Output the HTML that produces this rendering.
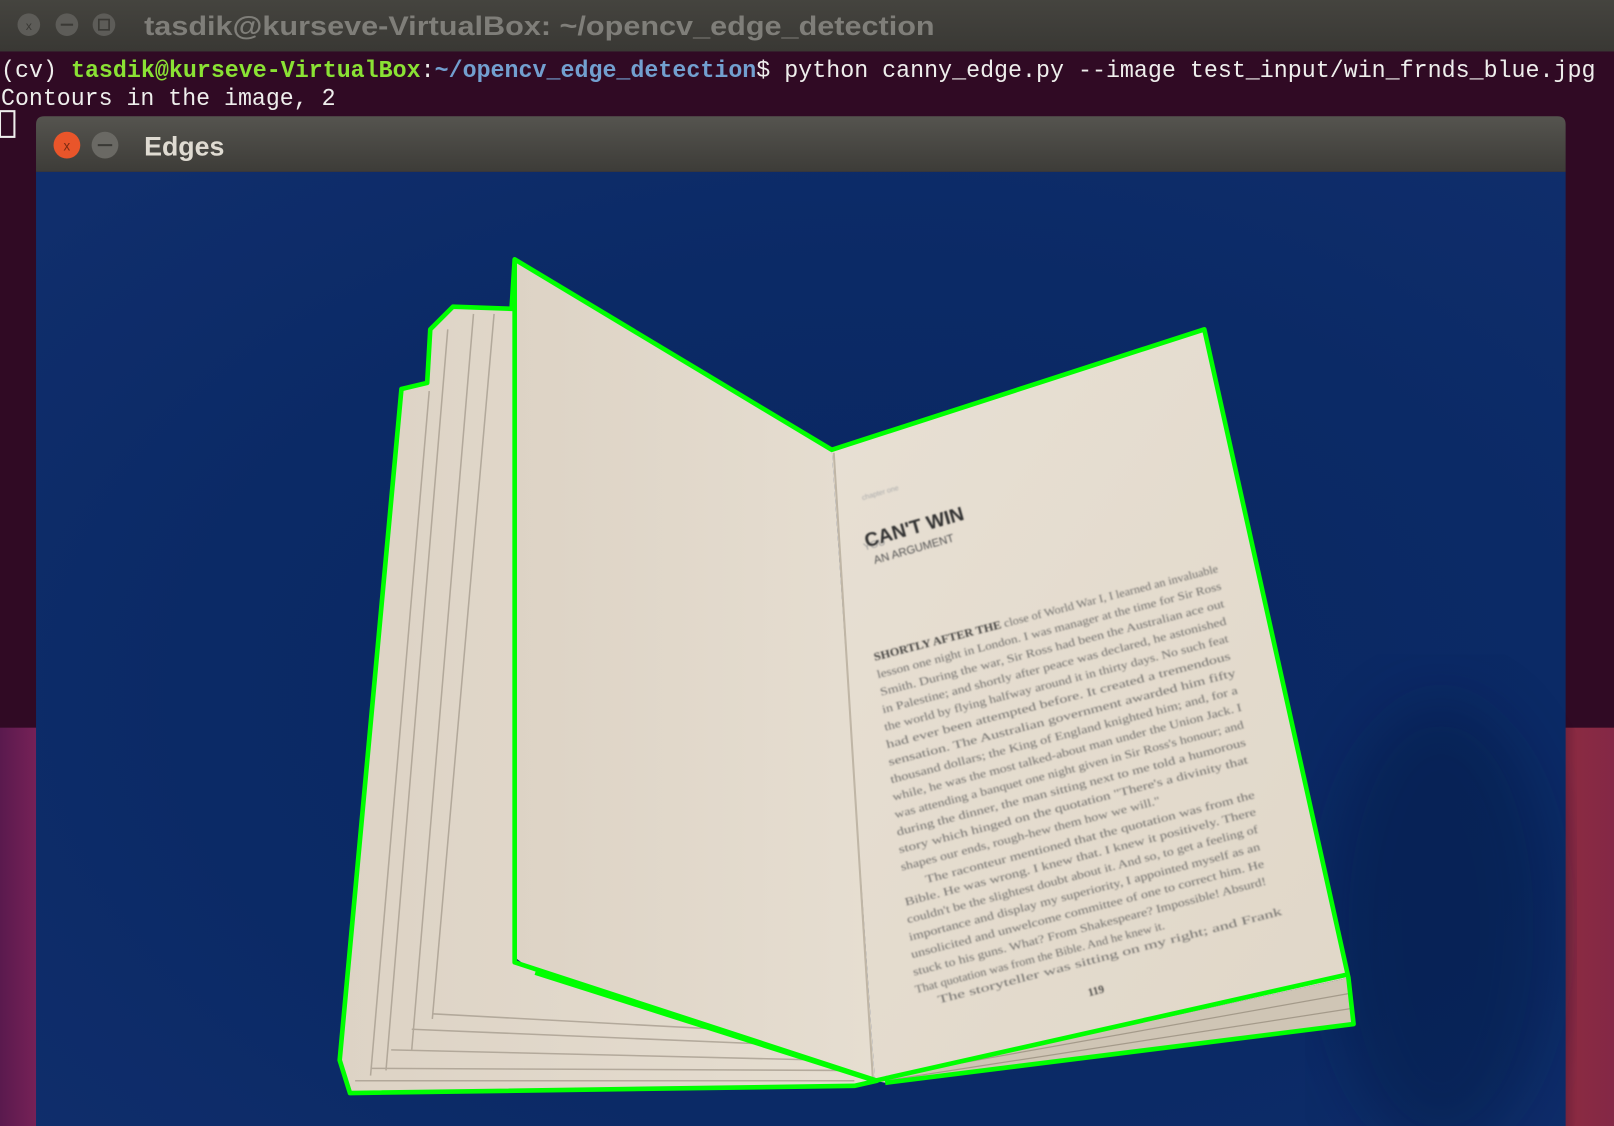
<!DOCTYPE html>
<html><head><meta charset="utf-8"><style>
html,body{margin:0;padding:0;width:1614px;height:1126px;overflow:hidden;background:#300a24}
svg{display:block}
</style></head><body>
<svg width="1614" height="1126" viewBox="0 0 1568 1094" preserveAspectRatio="none" xmlns="http://www.w3.org/2000/svg">
<defs>
<linearGradient id="tb" x1="0" y1="0" x2="0" y2="1"><stop offset="0" stop-color="#45443f"/><stop offset="1" stop-color="#393834"/></linearGradient>
<linearGradient id="wb" x1="0" y1="0" x2="0" y2="1"><stop offset="0" stop-color="#55544f"/><stop offset="1" stop-color="#3d3c38"/></linearGradient>
<linearGradient id="lp" x1="0" y1="0" x2="1" y2="0"><stop offset="0" stop-color="#5a1a4e"/><stop offset="1" stop-color="#7a2258"/></linearGradient>
<linearGradient id="rp" x1="0" y1="0" x2="1" y2="0"><stop offset="0" stop-color="#6a2038"/><stop offset=".3" stop-color="#8a2a42"/><stop offset="1" stop-color="#842846"/></linearGradient>
<radialGradient id="bg" cx=".55" cy=".55" r=".75"><stop offset="0" stop-color="#0a2660"/><stop offset=".6" stop-color="#0b2a66"/><stop offset="1" stop-color="#102e6c"/></radialGradient>
<linearGradient id="pageR" x1="0" y1="0" x2="1" y2="1"><stop offset="0" stop-color="#e8e0d4"/><stop offset="1" stop-color="#e0d7c8"/></linearGradient>
<linearGradient id="pageL" x1="0" y1="0" x2="1" y2="0"><stop offset="0" stop-color="#ddd3c5"/><stop offset="1" stop-color="#e6ded1"/></linearGradient>
<filter id="bl"><feGaussianBlur stdDeviation="0.7"/></filter>
<filter id="bl3"><feGaussianBlur stdDeviation="30"/></filter>
</defs>
<rect x="0" y="0" width="1568" height="1094" fill="#300a24"/>
<rect x="0" y="707" width="40" height="387" fill="url(#lp)"/>
<rect x="1515" y="707" width="53" height="387" fill="url(#rp)"/>
<rect x="0" y="0" width="1568" height="50" fill="url(#tb)"/>
<circle cx="28" cy="24" r="11" fill="#5d5c58"/><text x="28" y="29" font-family="Liberation Sans" font-size="12" fill="#3a3935" text-anchor="middle">x</text>
<circle cx="65" cy="24" r="11" fill="#5d5c58"/><rect x="59" y="23" width="12" height="2" fill="#3a3935"/>
<circle cx="101" cy="24" r="11" fill="#5d5c58"/><rect x="96" y="19" width="10" height="10" fill="none" stroke="#3a3935" stroke-width="1.6"/>
<text x="140" y="34" font-family="Liberation Sans, sans-serif" font-size="26" font-weight="bold" fill="#7f7e79" textLength="768" lengthAdjust="spacingAndGlyphs">tasdik@kurseve-VirtualBox: ~/opencv_edge_detection</text>
<g font-family="Liberation Mono, monospace" font-size="23">
<text x="1" y="75" textLength="1549" lengthAdjust="spacingAndGlyphs"><tspan fill="#eeeeec">(cv) </tspan><tspan fill="#8ae234" font-weight="bold">tasdik@kurseve-VirtualBox</tspan><tspan fill="#eeeeec">:</tspan><tspan fill="#729fcf" font-weight="bold">~/opencv_edge_detection</tspan><tspan fill="#eeeeec">$ python canny_edge.py --image test_input/win_frnds_blue.jpg</tspan></text>
<text x="1" y="102" fill="#eeeeec" textLength="325" lengthAdjust="spacingAndGlyphs">Contours in the image, 2</text>
</g>
<rect x="0" y="108" width="14" height="25" fill="none" stroke="#eeeeec" stroke-width="2"/>
<path d="M35 121 Q35 113 43 113 L1513 113 Q1521 113 1521 121 L1521 167 L35 167 Z" fill="url(#wb)"/>
<circle cx="65" cy="141" r="13" fill="#e9552a"/><text x="65" y="146" font-family="Liberation Sans" font-size="13" fill="#7a2a12" text-anchor="middle">x</text>
<circle cx="102" cy="141" r="13" fill="#6a6964"/><rect x="95" y="140" width="14" height="2" fill="#3a3935"/>
<text x="140" y="151" font-family="Liberation Sans, sans-serif" font-size="26" font-weight="bold" fill="#dfdbd2">Edges</text>
<rect x="35" y="167" width="1486" height="927" fill="url(#bg)"/>
<ellipse cx="1400" cy="900" rx="110" ry="220" fill="#06143a" opacity=".35" filter="url(#bl3)"/>
<path d="M500 252 L497 300 L440 298 L418 320 L415 372 L390 378 L330 1030 L340 1062 L830 1055 L852 1050 L500 935 Z" fill="url(#pageL)"/>
<g stroke="#a89e90" stroke-width="1.5" fill="none" opacity=".8">
<path d="M417 380 L360 1045"/><path d="M435 320 L375 1040"/><path d="M460 305 L400 1020"/><path d="M480 305 L420 990"/>
<path d="M345 1050 L830 1050"/><path d="M360 1038 L820 1040"/><path d="M380 1020 L800 1030"/><path d="M400 1000 L760 1015"/><path d="M420 985 L700 1000"/>
</g>
<path d="M500 252 L808 437 L850 1050 L520 945 L500 930 Z" fill="url(#pageL)"/>
<path d="M808 437 L1170 320 L1310 950 L850 1050 Z" fill="url(#pageR)"/>
<path d="M850 1050 L1310 950 L1315 995 L860 1052 Z" fill="#cfc5b5"/>
<g stroke="#9a9080" stroke-width="1.2" opacity=".8"><path d="M860 1046 L1312 965"/><path d="M860 1050 L1312 980"/></g>
<path d="M810 440 L848 1048" stroke="#c0b6a6" stroke-width="2"/>
<g font-family="Liberation Sans, sans-serif" fill="#444" filter="url(#bl)">
<text transform="translate(840 535) rotate(-16)" font-size="10" fill="#999">YOU</text>
<text transform="translate(842 532) rotate(-16)" font-size="19" font-weight="bold" fill="#333">CAN'T WIN</text>
<text transform="translate(850 548) rotate(-16)" font-size="11" fill="#555">AN ARGUMENT</text>
<text transform="translate(838 486) rotate(-16)" font-size="7" fill="#aaa">chapter one</text>
</g>
<g font-family="Liberation Serif, serif" font-size="11" fill="#555" filter="url(#bl)" opacity=".8">
<text transform="translate(850 642) rotate(-14.5)" textLength="345" lengthAdjust="spacingAndGlyphs"><tspan font-weight="bold" fill="#222">SHORTLY AFTER THE</tspan> close of World War I, I learned an invaluable</text>
<text transform="translate(853 659) rotate(-14.5)" textLength="345" lengthAdjust="spacingAndGlyphs">lesson one night in London. I was manager at the time for Sir Ross</text>
<text transform="translate(856 676) rotate(-14.5)" textLength="345" lengthAdjust="spacingAndGlyphs">Smith. During the war, Sir Ross had been the Australian ace out</text>
<text transform="translate(858 693) rotate(-14.5)" textLength="345" lengthAdjust="spacingAndGlyphs">in Palestine; and shortly after peace was declared, he astonished</text>
<text transform="translate(860 710) rotate(-14.5)" textLength="345" lengthAdjust="spacingAndGlyphs">the world by flying halfway around it in thirty days. No such feat</text>
<text transform="translate(862 727) rotate(-14.5)" textLength="345" lengthAdjust="spacingAndGlyphs">had ever been attempted before. It created a tremendous</text>
<text transform="translate(864 744) rotate(-14.5)" textLength="348" lengthAdjust="spacingAndGlyphs">sensation. The Australian government awarded him fifty</text>
<text transform="translate(866 761) rotate(-14.5)" textLength="348" lengthAdjust="spacingAndGlyphs">thousand dollars; the King of England knighted him; and, for a</text>
<text transform="translate(868 778) rotate(-14.5)" textLength="350" lengthAdjust="spacingAndGlyphs">while, he was the most talked-about man under the Union Jack. I</text>
<text transform="translate(870 795) rotate(-14.5)" textLength="350" lengthAdjust="spacingAndGlyphs">was attending a banquet one night given in Sir Ross's honour; and</text>
<text transform="translate(872 812) rotate(-14.5)" textLength="350" lengthAdjust="spacingAndGlyphs">during the dinner, the man sitting next to me told a humorous</text>
<text transform="translate(874 829) rotate(-14.5)" textLength="350" lengthAdjust="spacingAndGlyphs">story which hinged on the quotation "There's a divinity that</text>
<text transform="translate(876 846) rotate(-14.5)" textLength="260" lengthAdjust="spacingAndGlyphs">shapes our ends, rough-hew them how we will."</text>
<text transform="translate(900 858) rotate(-14.5)" textLength="330" lengthAdjust="spacingAndGlyphs">The raconteur mentioned that the quotation was from the</text>
<text transform="translate(880 880) rotate(-14.5)" textLength="352" lengthAdjust="spacingAndGlyphs">Bible. He was wrong. I knew that. I knew it positively. There</text>
<text transform="translate(882 897) rotate(-14.5)" textLength="352" lengthAdjust="spacingAndGlyphs">couldn't be the slightest doubt about it. And so, to get a feeling of</text>
<text transform="translate(884 914) rotate(-14.5)" textLength="352" lengthAdjust="spacingAndGlyphs">importance and display my superiority, I appointed myself as an</text>
<text transform="translate(886 931) rotate(-14.5)" textLength="354" lengthAdjust="spacingAndGlyphs">unsolicited and unwelcome committee of one to correct him. He</text>
<text transform="translate(888 948) rotate(-14.5)" textLength="354" lengthAdjust="spacingAndGlyphs">stuck to his guns. What? From Shakespeare? Impossible! Absurd!</text>
<text transform="translate(890 965) rotate(-14.5)" textLength="250" lengthAdjust="spacingAndGlyphs">That quotation was from the Bible. And he knew it.</text>
<text transform="translate(912 975) rotate(-14.5)" textLength="345" lengthAdjust="spacingAndGlyphs">The storyteller was sitting on my right; and Frank</text>
<text transform="translate(1058 968) rotate(-14.5)" font-weight="bold" fill="#333">119</text>
</g>
<g fill="none" stroke="#00ff00" stroke-width="4.5" stroke-linejoin="round">
<path d="M500 252 L497 300 L440 298 L418 320 L415 372 L390 378 L330 1030 L340 1062 L830 1055 L852 1050 L500 935 L500 252 L808 437 L1170 320 L1310 950 L1315 995 L860 1052"/>
<path d="M520 945 L850 1050 L1308 947"/>
</g>
</svg>
</body></html>
